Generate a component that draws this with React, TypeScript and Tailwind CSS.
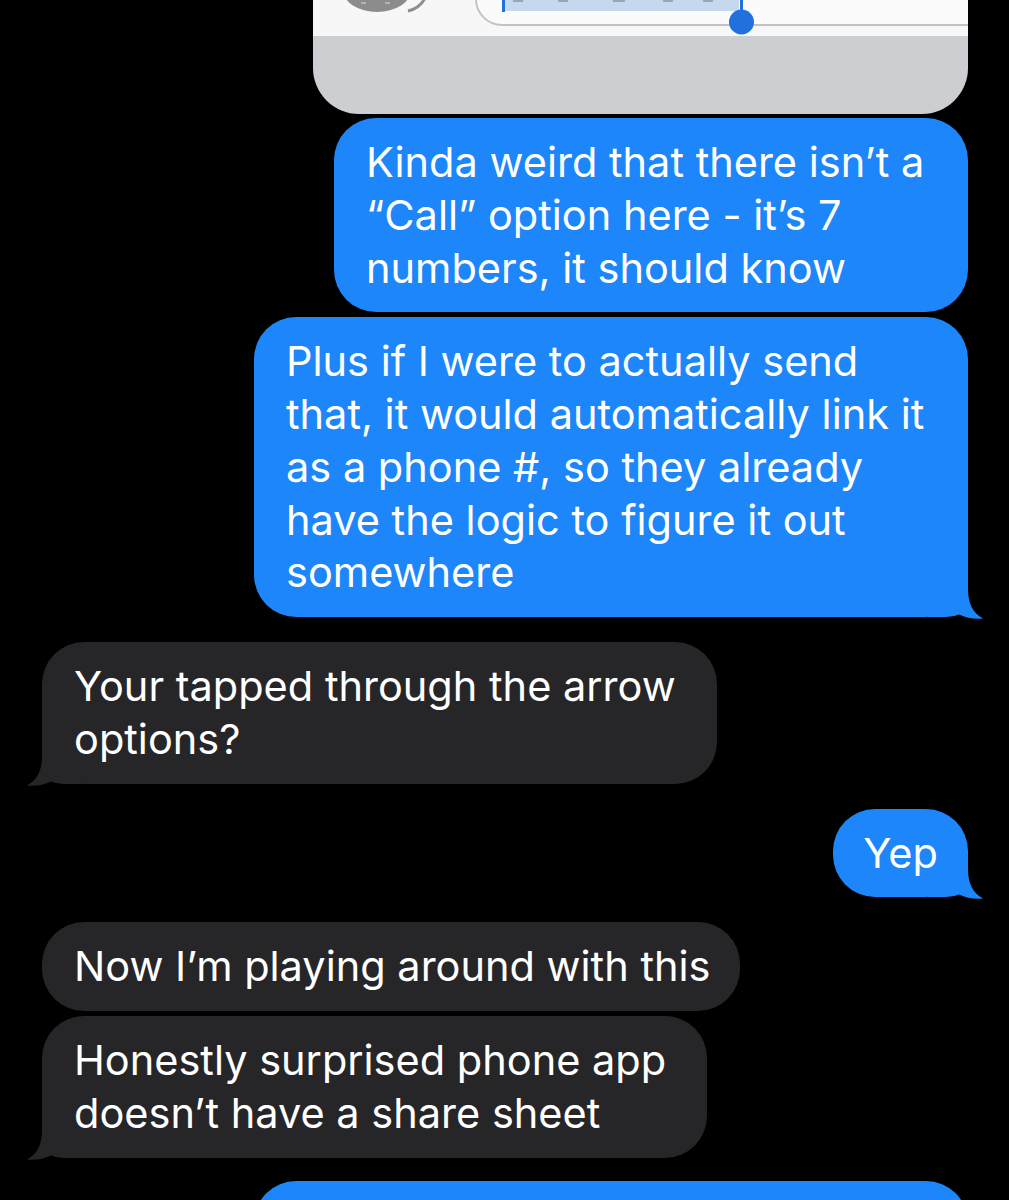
import React from "react";

const BLUE = "#1c86fa";
const GRAY = "#262629";

function Tail({ side, color }: { side: "left" | "right"; color: string }) {
  const pos =
    side === "right"
      ? "absolute right-[-16px] bottom-[-2px]"
      : "absolute left-[-16px] bottom-[-2px] -scale-x-100";
  return (
    <svg className={pos} width="56" height="48" viewBox="0 0 56 48" aria-hidden>
      <path
        d="M0 0 H40 V18 C40 33 45 42 55 47.5 C47 48.5 38 47 31 43.5 C26 45.6 20 46 12 46 H0 Z"
        fill={color}
      />
    </svg>
  );
}

function Bubble({
  lines,
  side,
  width,
  tail,
  className = "",
  center = false,
}: {
  lines: string[];
  side: "left" | "right";
  width: string;
  tail?: boolean;
  className?: string;
  center?: boolean;
}) {
  const color = side === "right" ? BLUE : GRAY;
  return (
    <div className={`flex ${side === "right" ? "justify-end" : "justify-start"} ${className}`}>
      <div
        className={`relative rounded-[42px] py-[18px] ${center ? "px-0 text-center" : "pl-[32px]"} ${width} text-white text-[41.5px] leading-[52.75px] ${
          side === "right" ? "bg-[#1c86fa]" : "bg-[#262629]"
        }`}
        style={{ fontFamily: "Inter, 'Noto Sans', sans-serif" }}
      >
        {tail && <Tail side={side} color={color} />}
        {lines.map((l, i) => (
          <div key={i} className="relative whitespace-nowrap h-[52.75px]">
            {l}
          </div>
        ))}
      </div>
    </div>
  );
}

function SentImage() {
  return (
    <div className="flex justify-end">
      <div className="w-[655px] h-[114px] rounded-b-[46px] bg-[#cdced2] overflow-hidden flex flex-col">
        <svg width="655" height="36" viewBox="0 0 655 36" className="block shrink-0">
          <rect x="0" y="0" width="655" height="36" fill="#f7f7f7" />
          <ellipse cx="64" cy="-10" rx="34" ry="22" fill="#8c8c8c" />
          <rect x="48" y="2" width="5" height="2" fill="#b5b5b5" />
          <rect x="72" y="2" width="5" height="2" fill="#b5b5b5" />
          <path d="M95 11 Q108 8 113 -4" stroke="#8e8e8e" strokeWidth="3" fill="none" />
          <rect x="163" y="-40" width="540" height="65" rx="26" fill="#fbfbfb" stroke="#c3c3c5" strokeWidth="2" />
          <rect x="190" y="0" width="236" height="11" fill="#c5d8ee" />
          <rect x="200" y="0" width="10" height="2" fill="#9aa6b5" />
          <rect x="245" y="0" width="10" height="2" fill="#9aa6b5" />
          <rect x="300" y="0" width="12" height="2" fill="#9aa6b5" />
          <rect x="350" y="0" width="10" height="2" fill="#9aa6b5" />
          <rect x="390" y="0" width="10" height="2" fill="#9aa6b5" />
          <rect x="189" y="0" width="3" height="12" fill="#2070de" />
          <rect x="427" y="0" width="3" height="14" fill="#2070de" />
          <circle cx="428.5" cy="22" r="12.5" fill="#2070de" />
        </svg>
      </div>
    </div>
  );
}

export default function App() {
  return (
    <div className="w-[1009px] h-[1200px] overflow-hidden bg-black pl-[42px] pr-[41px]">
      <SentImage />
      <Bubble
        className="mt-[4px]"
        side="right"
        width="w-[634px]"
        lines={[
          "Kinda weird that there isn\u2019t a",
          "\u201CCall\u201D option here - it\u2019s 7",
          "numbers, it should know",
        ]}
      />
      <Bubble
        className="mt-[5px]"
        side="right"
        width="w-[714px]"
        tail
        lines={[
          "Plus if I were to actually send",
          "that, it would automatically link it",
          "as a phone #, so they already",
          "have the logic to figure it out",
          "somewhere",
        ]}
      />
      <Bubble
        className="mt-[25px]"
        side="left"
        width="w-[675px]"
        tail
        lines={["Your tapped through the arrow", "options?"]}
      />
      <Bubble className="mt-[25px]" side="right" width="w-[135px]" tail center lines={["Yep"]} />
      <Bubble
        className="mt-[25px]"
        side="left"
        width="w-[698px]"
        lines={["Now I\u2019m playing around with this"]}
      />
      <Bubble
        className="mt-[5px]"
        side="left"
        width="w-[665px]"
        tail
        lines={["Honestly surprised phone app", "doesn\u2019t have a share sheet"]}
      />
      <Bubble className="mt-[23px]" side="right" width="w-[714px]" lines={["", "", ""]} />
    </div>
  );
}
